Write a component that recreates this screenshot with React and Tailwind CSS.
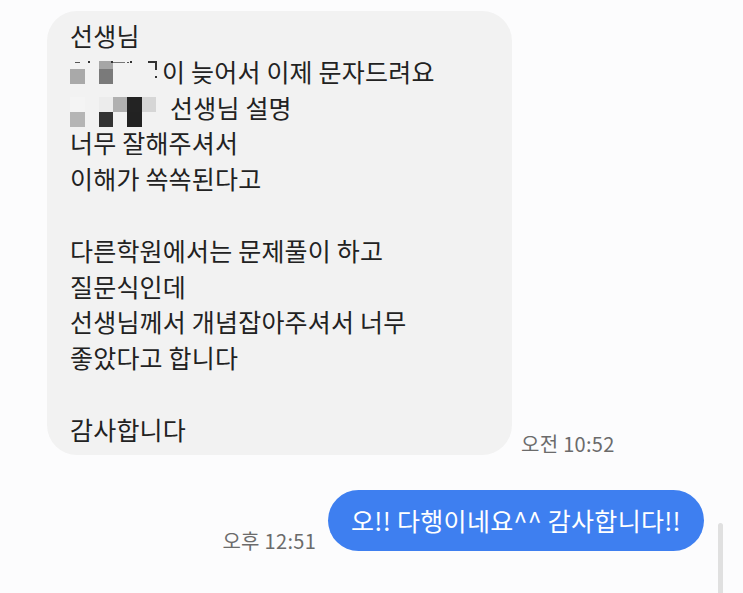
import React from "react";

const FONT = { fontFamily: '"Noto Sans CJK KR", "Noto Sans", sans-serif' };

function Cell({ c, children }) {
  return (
    <div className="relative" style={{ background: c }}>
      {children}
    </div>
  );
}

export default function App() {
  return (
    <div
      className="relative w-[743px] h-[593px] overflow-hidden bg-[#fcfcfd] text-[#222222]"
      style={FONT}
    >
      <div className="flex flex-col pt-[11px]">
        <div className="flex items-end pl-[47px]">
          <div className="w-[465px] rounded-[30px] bg-[#f2f2f2] pl-[23px] pr-[18px] pt-[7px] pb-[7px] text-[25px] leading-[35.8px] tracking-[0.2px]">
            <div>선생님</div>

            <div className="flex h-[35.8px] items-start">
              <div className="mt-[7px] grid grid-cols-[15px_14px_14px_14px_15px] grid-rows-[8px_15px]">
                <Cell c="transparent">
                  <div className="mt-[1px] ml-[5px] h-[1px] w-[5px] bg-[#555]" />
                </Cell>
                <Cell c="transparent">
                  <div className="ml-[3px] h-[2px] w-[2px] bg-[#333]" />
                </Cell>
                <Cell c="#a6a6a6">
                  <div className="flex justify-end">
                    <div className="h-[2px] w-[2px] bg-[#333]" />
                  </div>
                </Cell>
                <Cell c="transparent">
                  <div className="mt-[1px] h-[1px] w-[12px] bg-[#777]" />
                </Cell>
                <Cell c="transparent">
                  <div className="flex">
                    <div className="mt-[1px] h-[1px] w-[2px] bg-[#555]" />
                    <div className="ml-[1px] h-[2px] w-[2px] bg-[#333]" />
                  </div>
                </Cell>
                <Cell c="#a9a9a9" />
                <Cell c="transparent" />
                <Cell c="#7a7a7a" />
                <Cell c="transparent" />
                <Cell c="transparent" />
              </div>
              <div className="mt-[7px] ml-[6px] flex flex-col items-end">
                <div className="h-[9px] w-[9px] border-t-2 border-r-2 border-[#333]" />
                <div className="mt-[6px] h-[2px] w-[2px] bg-[#333]" />
              </div>
              <span className="ml-[5px] whitespace-nowrap">이 늦어서 이제 문자드려요</span>
            </div>

            <div className="flex h-[35.8px] items-start">
              <div className="mt-[7px] grid grid-cols-[15px_14px_14px_14px_15px_14px] grid-rows-[15px_15px]">
                <Cell c="#f4f4f4" />
                <Cell c="transparent" />
                <Cell c="#ececec" />
                <Cell c="#b0b0b0" />
                <Cell c="#232323" />
                <Cell c="#d6d6d6" />
                <Cell c="#b5b5b5" />
                <Cell c="transparent" />
                <Cell c="#333333" />
                <Cell c="transparent" />
                <Cell c="#222222" />
                <Cell c="transparent" />
              </div>
              <span className="ml-[14px] whitespace-nowrap">선생님 설명</span>
            </div>

            <div>너무 잘해주셔서</div>
            <div>이해가 쏙쏙된다고</div>
            <div className="h-[35.8px]" />
            <div>다른학원에서는 문제풀이 하고</div>
            <div>질문식인데</div>
            <div>선생님께서 개념잡아주셔서 너무</div>
            <div>좋았다고 합니다</div>
            <div className="h-[35.8px]" />
            <div>감사합니다</div>
          </div>
          <div className="ml-[9px] mb-[1px] text-[20px] leading-[20px] tracking-[0.3px] text-[#6b6b6b]">
            오전 10:52
          </div>
        </div>

        <div className="mt-[35px] flex items-end justify-end pr-[39px]">
          <div className="mr-[12px] text-[20px] leading-[20px] tracking-[0.3px] text-[#6b6b6b]">
            오후 12:51
          </div>
          <div className="flex h-[61px] items-center rounded-full bg-[#3e7ff0] px-[23px] text-[25px] leading-[30px] tracking-[0.3px] text-white">
            오!! 다행이네요^^ 감사합니다!!
          </div>
        </div>
      </div>

      <div className="absolute left-[718px] top-[523px] h-[90px] w-[5px] rounded-full bg-[#e0e0e0]" />
    </div>
  );
}
